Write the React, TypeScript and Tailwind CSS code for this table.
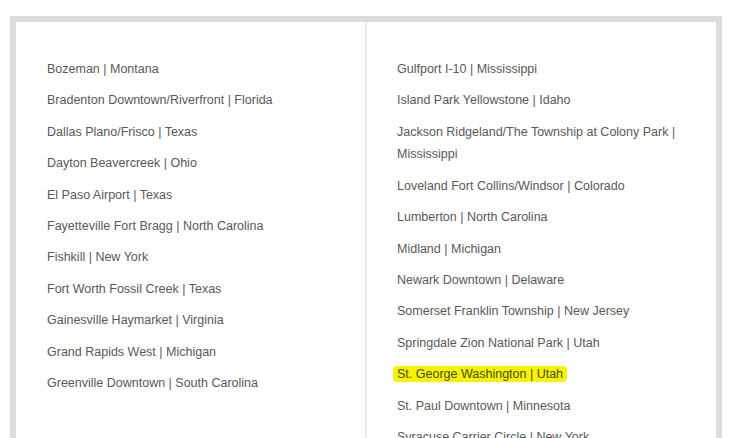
import React from "react";

const leftLocations = [
  "Bozeman | Montana",
  "Bradenton Downtown/Riverfront | Florida",
  "Dallas Plano/Frisco | Texas",
  "Dayton Beavercreek | Ohio",
  "El Paso Airport | Texas",
  "Fayetteville Fort Bragg | North Carolina",
  "Fishkill | New York",
  "Fort Worth Fossil Creek | Texas",
  "Gainesville Haymarket | Virginia",
  "Grand Rapids West | Michigan",
  "Greenville Downtown | South Carolina",
];

const rightLocations = [
  "Gulfport I-10 | Mississippi",
  "Island Park Yellowstone | Idaho",
  "Jackson Ridgeland/The Township at Colony Park | Mississippi",
  "Loveland Fort Collins/Windsor | Colorado",
  "Lumberton | North Carolina",
  "Midland | Michigan",
  "Newark Downtown | Delaware",
  "Somerset Franklin Township | New Jersey",
  "Springdale Zion National Park | Utah",
  "St. George Washington | Utah",
  "St. Paul Downtown | Minnesota",
  "Syracuse Carrier Circle | New York",
];

const highlighted = "St. George Washington | Utah";

function LocationList({ items }: { items: string[] }) {
  return (
    <ul className="space-y-[8.8px]">
      {items.map((name) => (
        <li key={name} className="leading-[22.6px]">
          {name === highlighted ? (
            <span className="bg-[#f7f300] rounded-[4px] px-[4px] -mx-[4px] py-[1px] text-[#4a4a2a]">{name}</span>
          ) : (
            name
          )}
        </li>
      ))}
    </ul>
  );
}

export default function App() {
  return (
    <div className="bg-white h-[438px] overflow-hidden pt-4 px-[10px] font-['Liberation_Sans',Arial,sans-serif] text-[12.5px] text-[#595959]">
      <div className="w-[712px] h-[440px] border-[6px] border-b-0 border-[#dcdcdc] bg-white grid grid-cols-2">
        {/* Left column */}
        <div className="border-r border-[#e6e6e6] pl-[31px] pr-[25px] pt-[36px]">
          <LocationList items={leftLocations} />
        </div>
        {/* Right column */}
        <div className="border-l border-[#f0f0f0] pl-[30px] pr-[31px] pt-[36px]">
          <LocationList items={rightLocations} />
        </div>
      </div>
    </div>
  );
}
